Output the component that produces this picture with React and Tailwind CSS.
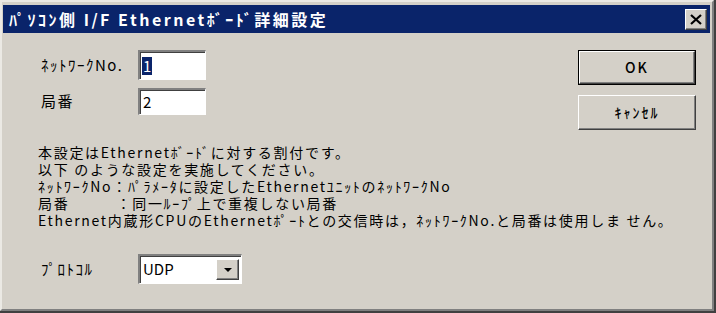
import React from "react";

const font = { fontFamily: '"Noto Sans CJK JP", "Liberation Sans", sans-serif' };

function Sunken({ className = "", children }) {
  return (
    <div className={`border-t-2 border-l-2 border-b border-r border-t-[#808080] border-l-[#808080] border-b-white border-r-white bg-white shadow-[inset_1px_1px_0_#404040] ${className}`}>
      {children}
    </div>
  );
}

function Button({ children, isDefault }) {
  const inner = (
    <div className="flex h-full w-full items-center justify-center border border-t-white border-l-white border-b-[#404040] border-r-[#404040] shadow-[inset_-1px_-1px_0_#808080] text-[14px] font-medium tracking-[2px] text-black">
      {children}
    </div>
  );
  return isDefault ? (
    <div className="h-[35px] w-[118px] border border-black">{inner}</div>
  ) : (
    <div className="h-[35px] w-[118px]">{inner}</div>
  );
}

export default function App() {
  return (
    <div className="h-[313px] w-[716px] overflow-hidden border-r-2 border-b-2 border-r-[#404040] border-b-[#404040] bg-[#d4d0c8]" style={font}>
      <div className="flex h-full flex-col border-t-2 border-l-2 border-r-2 border-b-2 border-t-[#ebe9e4] border-l-[#ebe9e4] border-r-[#808080] border-b-[#808080] pt-[3px] pl-px pr-[2px]">
        {/* TITLE BAR */}
        <div className="flex h-[28px] items-center justify-between bg-[#0a246a] pl-[6px] pr-[3px]">
          <span className="text-[16px] font-bold text-white tracking-[2.5px]">ﾊﾟｿｺﾝ側 I/F Ethernetﾎﾞｰﾄﾞ詳細設定</span>
          <div className="flex h-[21px] w-[22px] items-center justify-center bg-[#d4d0c8] border border-t-white border-l-white border-b-[#404040] border-r-[#404040] shadow-[inset_-1px_-1px_0_#808080]">
            <svg width="12" height="11" viewBox="0 0 12 11">
              <path d="M1 1 L11 10 M11 1 L1 10" stroke="black" strokeWidth="2.2" />
            </svg>
          </div>
        </div>

        {/* BODY */}
        <div className="flex flex-1 flex-col pl-[35px] pr-[14px] text-black">
          <div className="flex justify-between pt-[17px]">
            <div className="flex flex-col gap-[8px]">
              <div className="flex items-center">
                <span className="w-[100px] pl-[3px] text-[15px] tracking-[1.5px]">ﾈｯﾄﾜｰｸNo.</span>
                <Sunken className="flex h-[30px] w-[68px] items-center pl-[2px]">
                  <span className="bg-[#0a246a] px-px text-[15px] leading-[18px] text-white">1</span>
                </Sunken>
              </div>
              <div className="flex items-center">
                <span className="w-[100px] pl-[3px] text-[15px] tracking-[1.5px]">局番</span>
                <Sunken className="flex h-[27px] w-[68px] items-center pl-[3px]">
                  <span className="text-[15px] leading-[18px]">2</span>
                </Sunken>
              </div>
            </div>
            <div className="flex flex-col gap-[10px]">
              <Button isDefault>OK</Button>
              <Button>ｷｬﾝｾﾙ</Button>
            </div>
          </div>

          <div className="mt-[14px] flex flex-col text-[14px] leading-[17px] tracking-[1.7px]">
            <div>本設定はEthernetﾎﾞｰﾄﾞに対する割付です。</div>
            <div>以下 のような設定を実施してください。</div>
            <div>ﾈｯﾄﾜｰｸNo：ﾊﾟﾗﾒｰﾀに設定したEthernetﾕﾆｯﾄのﾈｯﾄﾜｰｸNo</div>
            <div>局番　　　：同一ﾙｰﾌﾟ上で重複しない局番</div>
            <div>Ethernet内蔵形CPUのEthernetﾎﾟｰﾄとの交信時は，ﾈｯﾄﾜｰｸNo.と局番は使用しま せん。</div>
          </div>

          <div className="mt-[25px] flex items-center">
            <span className="w-[100px] pl-[3px] text-[15px] tracking-[1.5px]">ﾌﾟﾛﾄｺﾙ</span>
            <Sunken className="flex h-[30px] w-[104px] items-center justify-between pl-[3px] pr-[2px]">
              <span className="text-[15px]">UDP</span>
              <div className="flex h-[21px] w-[23px] items-center justify-center bg-[#d4d0c8] border border-t-white border-l-white border-b-[#404040] border-r-[#404040] shadow-[inset_-1px_-1px_0_#808080]">
                <svg width="8" height="4" viewBox="0 0 8 4">
                  <path d="M0 0 H8 L4 4 Z" fill="black" />
                </svg>
              </div>
            </Sunken>
          </div>
        </div>
      </div>
    </div>
  );
}
